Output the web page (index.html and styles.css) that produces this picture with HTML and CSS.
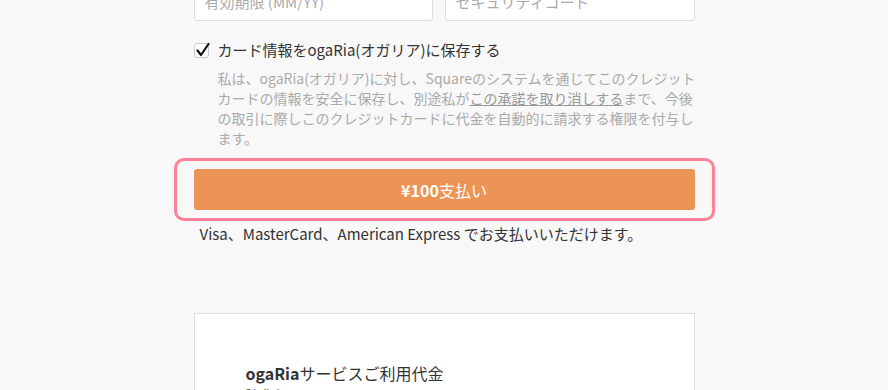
FILE: index.html
```html
<!DOCTYPE html>
<html lang="ja">
<head>
  <meta charset="UTF-8">
  <title>お支払い</title>
  <link rel="stylesheet" href="styles.css">
</head>
<body>
  <div class="checkout">
    <div class="card-fields">
      <div class="field field-exp">有効期限 (MM/YY)</div>
      <div class="field field-cvv">セキュリティコード</div>
    </div>

    <label class="save-row">
      <span class="checkbox">
        <svg width="15" height="15" viewBox="0 0 15 15">
          <path d="M2.5 7.5 L6 12 L13.5 1" fill="none" stroke="#111" stroke-width="2.2" stroke-linecap="round" stroke-linejoin="round"/>
        </svg>
      </span>
      <span>カード情報をogaRia(オガリア)に保存する</span>
    </label>
    <p class="consent">私は、ogaRia(オガリア)に対し、Squareのシステムを通じてこのクレジットカードの情報を安全に保存し、別途私が<a href="#">この承諾を取り消しする</a>まで、今後の取引に際しこのクレジットカードに代金を自動的に請求する権限を付与します。</p>

    <div class="pay-focus">
      <button class="pay-btn"><b>¥100</b>支払い</button>
    </div>
    <p class="brands">Visa、MasterCard、American Express でお支払いいただけます。</p>

    <div class="invoice">
      <div class="invoice-title"><b>ogaRia</b>サービスご利用代金</div>
      <div class="invoice-no">請求書 #000001-R-0001</div>
    </div>
  </div>
</body>
</html>
```

FILE: styles.css
```css
body {
  margin: 0;
  background: #f8f8f8;
  color: #333;
  font-family: "Noto Sans CJK JP", "Noto Sans", sans-serif;
  overflow: hidden;
}
.checkout {
  width: 501px;
  margin: -23px auto 0;
}
.card-fields {
  display: grid;
  grid-template-columns: 239px 250px;
  gap: 12px;
}
.field {
  height: 37px;
  line-height: 37px;
  background: #fff;
  border: 1px solid #ddd;
  border-radius: 3px;
  padding: 5px 10px 0;
  font-size: 15px;
  color: #aaa;
}
.save-row {
  display: flex;
  align-items: center;
  gap: 9px;
  margin-top: 19px;
  font-size: 15px;
  line-height: 20px;
}
.checkbox {
  width: 13px;
  height: 13px;
  border: 1px solid #ccc;
  border-radius: 3px;
  background: #fff;
  position: relative;
  flex-shrink: 0;
}
.checkbox svg {
  position: absolute;
  left: 0;
  top: -1px;
}
.consent {
  margin: 8px -5px 0 0;
  padding-left: 24px;
  font-size: 14px;
  line-height: 20px;
  color: #aaa;
}
.consent a {
  color: #999;
  text-decoration: underline;
}
.pay-focus {
  margin: 10px -20px 0;
  padding: 8px 17px;
  border: 3px solid #ff8099;
  border-radius: 10px;
}
.pay-btn {
  display: block;
  width: 100%;
  height: 41px;
  border: 0;
  border-radius: 3px;
  background: #ec9455;
  color: #fff;
  font-family: inherit;
  font-size: 16px;
}
.brands {
  margin: 3px 0 0;
  padding-left: 6px;
  font-size: 15px;
  line-height: 20px;
}
.invoice {
  margin-top: 69px;
  height: 200px;
  background: #fff;
  border: 1px solid #ddd;
  padding: 47px 51px 0;
}
.invoice-title {
  font-size: 16px;
  line-height: 24px;
}
.invoice-no {
  font-size: 13px;
  line-height: 20px;
  color: #555;
}
```
